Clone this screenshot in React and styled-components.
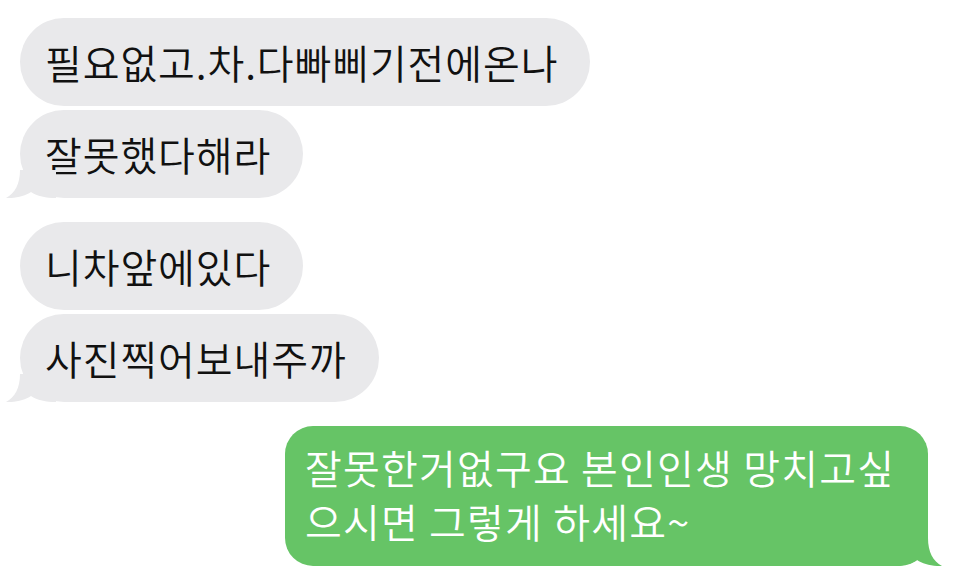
import styled, { createGlobalStyle } from 'styled-components';

// ── Global ────────────────────────────────────────────────
const GlobalStyle = createGlobalStyle`
  html, body {
    margin: 0;
    padding: 0;
    background: #fff;
  }
  body {
    font-family: 'Noto Sans CJK KR', 'Noto Sans', sans-serif;
  }
`;

// ── Layout ────────────────────────────────────────────────
const Thread = styled.div`
  width: 954px;
  height: 578px;
  box-sizing: border-box;
  padding: 18px 26px 0 20px;
  display: flex;
  flex-direction: column;
  overflow: hidden;
  background: #fff;
`;

const Group = styled.div`
  display: flex;
  flex-direction: column;
  align-items: ${({ $mine }) => ($mine ? 'flex-end' : 'flex-start')};
  gap: 4px;
  margin-bottom: 24px;
`;

// ── Bubbles ───────────────────────────────────────────────
const Bubble = styled.div`
  position: relative;
  height: 88px;
  box-sizing: border-box;
  padding: 0 32px 0 25px;
  display: flex;
  align-items: center;
  border-radius: 44px;
  background: #e9e9eb;
  color: #111;
  font-size: 40px;
  font-weight: 350;
  letter-spacing: 0.9px;
  line-height: 1;
  white-space: nowrap;
`;

const SentBubble = styled.div`
  position: relative;
  width: 643px;
  box-sizing: border-box;
  padding: 14px 20px 18px 20px;
  border-radius: 28px;
  background: #66c466;
  color: #fff;
  font-size: 40px;
  font-weight: 350;
  letter-spacing: 1.2px;
  line-height: 54px;
  white-space: nowrap;
`;

const Tail = styled.svg`
  position: absolute;
  bottom: 0;
  ${({ $right }) => ($right ? 'right: -14px;' : 'left: -14px;')}
  width: 50px;
  height: 28px;
  ${({ $right }) => ($right ? 'transform: scaleX(-1);' : '')}
`;

function BubbleTail({ color, right }) {
  return (
    <Tail $right={right} viewBox="0 0 50 28">
      <path
        d="M14 0 C14 14 9 23 0 28 C10 28.5 19 26 25 22 C31 26 40 28 50 28 L50 0 Z"
        fill={color}
      />
    </Tail>
  );
}

// ── Component ─────────────────────────────────────────────
export default function App() {
  return (
    <>
      <GlobalStyle />
      <Thread>
        <Group>
          <Bubble>필요없고.차.다빠삐기전에온나</Bubble>
          <Bubble>
            잘못했다해라
            <BubbleTail color="#e9e9eb" />
          </Bubble>
        </Group>

        <Group>
          <Bubble>니차앞에있다</Bubble>
          <Bubble>
            사진찍어보내주까
            <BubbleTail color="#e9e9eb" />
          </Bubble>
        </Group>

        <Group $mine>
          <SentBubble>
            잘못한거없구요 본인인생 망치고싶
            <br />
            으시면 그렇게 하세요~
            <BubbleTail color="#66c466" right />
          </SentBubble>
        </Group>
      </Thread>
    </>
  );
}
